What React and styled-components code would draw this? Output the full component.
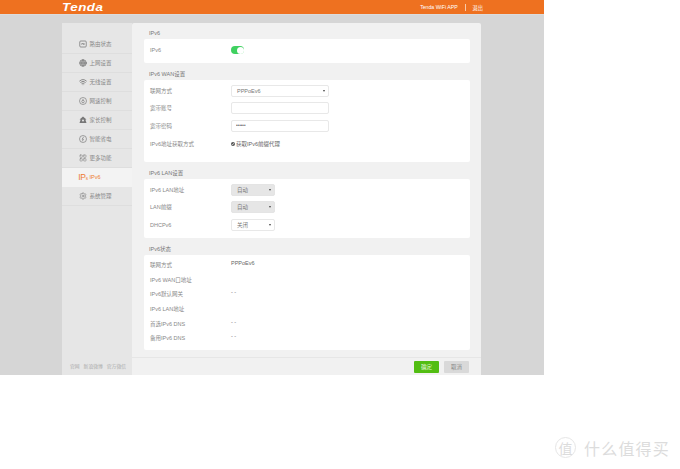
import React from 'react'
import styled, { createGlobalStyle } from 'styled-components'
import { Globe, Wifi, LayoutGrid, Settings } from 'lucide-react'

const Global = createGlobalStyle`
  html, body { margin: 0; padding: 0; background: #fff; }
  body { font-family: "Liberation Sans", "Noto Sans CJK SC", sans-serif; }
`

const IpGlyph = styled.b`
  font-size: 8.5px;
  font-weight: normal;
  color: #ee7b2f;
  letter-spacing: -0.2px;
  white-space: nowrap;
  small {
    font-size: 4.5px;
  }
`

const StatusIcon = () => (
  <svg width="8" height="8" viewBox="0 0 16 16" fill="none" stroke="#777" strokeWidth="1.5">
    <rect x="1.5" y="2" width="13" height="12" rx="2" />
    <path d="M4 8h3l1-2 1 3 1-1h2" />
  </svg>
)

const SpeedIcon = () => (
  <svg width="8" height="8" viewBox="0 0 16 16" fill="none" stroke="#777" strokeWidth="1.3">
    <circle cx="8" cy="8" r="7" />
    <circle cx="8" cy="9" r="2.5" />
    <path d="M8 6.5V4" />
  </svg>
)

const ParentIcon = () => (
  <svg width="8" height="8" viewBox="0 0 16 16" fill="#777">
    <path d="M8 1 1 7h2v1L1 14h14l-2-6V7h2z" />
    <circle cx="8" cy="9" r="2" fill="#e6e6e6" />
  </svg>
)

const PowerIcon = () => (
  <svg width="8" height="8" viewBox="0 0 16 16" fill="none" stroke="#777" strokeWidth="1.3">
    <circle cx="8" cy="8" r="7" />
    <path d="M9.5 3.5 6 8.5h3L6.5 12.5" />
  </svg>
)

const menu = [
  { label: '路由状态', icon: <StatusIcon /> },
  { label: '上网设置', icon: <Globe size={8} color="#777" fill="#bbb" strokeWidth={2} /> },
  { label: '无线设置', icon: <Wifi size={8} color="#777" strokeWidth={2.5} /> },
  { label: '网速控制', icon: <SpeedIcon /> },
  { label: '家长控制', icon: <ParentIcon /> },
  { label: '智能省电', icon: <PowerIcon /> },
  { label: '更多功能', icon: <LayoutGrid size={8} color="#777" strokeWidth={1.5} /> },
  { label: 'IPv6', active: true, icon: <IpGlyph>IP<small>s</small></IpGlyph> },
  { label: '系统管理', icon: <Settings size={8} color="#777" strokeWidth={1.75} /> },
]

const status = [
  ['联网方式', 'PPPoEv6'],
  ['IPv6 WAN口地址', ''],
  ['IPv6默认网关', '- -'],
  ['IPv6 LAN地址', ''],
  ['首选IPv6 DNS', '- -'],
  ['备用IPv6 DNS', '- -'],
]

export default function App() {
  return (
    <>
      <Global />
      <Page>
        <Header>
          <Logo>Tenda</Logo>
          <HeaderLinks>
            <HeaderLink>Tenda WiFi APP</HeaderLink>
            <HeaderSep />
            <HeaderLink>退出</HeaderLink>
          </HeaderLinks>
        </Header>
        <Body>
          <Sidebar>
            <Menu>
              {menu.map((m) => (
                <MenuItem key={m.label} $active={m.active}>
                  <MenuIcon>{m.icon}</MenuIcon>
                  {m.label}
                </MenuItem>
              ))}
            </Menu>
            <SideFooter>
              <span>官网</span>
              <span>新浪微博</span>
              <span>官方微信</span>
            </SideFooter>
          </Sidebar>
          <Main>
            <Content>
              <SectionTitle>IPv6</SectionTitle>
              <Card $height={24}>
                <Row $height={18}>
                  <Label>IPv6</Label>
                  <Toggle />
                </Row>
              </Card>

              <SectionTitle>IPv6 WAN设置</SectionTitle>
              <Card $height={82}>
                <Row>
                  <Label>联网方式</Label>
                  <SelectBox $width={98}>PPPoEv6<Caret /></SelectBox>
                </Row>
                <Row>
                  <Label>宽带账号</Label>
                  <TextInput />
                </Row>
                <Row>
                  <Label>宽带密码</Label>
                  <TextInput type="password" value="123456" readOnly />
                </Row>
                <Row>
                  <Label>IPv6地址获取方式</Label>
                  <CheckRow>
                    <Check type="checkbox" checked readOnly />
                    获取IPv6前缀代理
                  </CheckRow>
                </Row>
              </Card>

              <SectionTitle>IPv6 LAN设置</SectionTitle>
              <Card $height={59}>
                <Row>
                  <Label>IPv6 LAN地址</Label>
                  <SelectBox $width={44} $disabled>自动<Caret /></SelectBox>
                </Row>
                <Row>
                  <Label>LAN前缀</Label>
                  <SelectBox $width={44} $disabled>自动<Caret /></SelectBox>
                </Row>
                <Row>
                  <Label>DHCPv6</Label>
                  <SelectBox $width={44}>关闭<Caret /></SelectBox>
                </Row>
              </Card>

              <SectionTitle>IPv6状态</SectionTitle>
              <Card $height={95}>
                {status.map(([k, v]) => (
                  <Row key={k} $height={14.7}>
                    <Label>{k}</Label>
                    <Value>{v}</Value>
                  </Row>
                ))}
              </Card>
            </Content>
            <ActionBar>
              <Button $primary>确定</Button>
              <Button>取消</Button>
            </ActionBar>
          </Main>
        </Body>
      </Page>
      <Watermark>
        <WatermarkBadge>值</WatermarkBadge>
        什么值得买
      </Watermark>
    </>
  )
}

const Page = styled.div`
  width: 544px;
  height: 375px;
  background: #d6d6d6;
  display: flex;
  flex-direction: column;
`
const Header = styled.div`
  height: 15px;
  box-sizing: border-box;
  flex: none;
  background: #ee7120;
  border-bottom: 1px solid #dcdcdc;
  display: flex;
  align-items: center;
  justify-content: space-between;
  padding: 0 62px;
  color: #fff;
`
const Logo = styled.div`
  font: italic bold 11px "Liberation Sans", sans-serif;
  letter-spacing: 0.4px;
  transform: scaleX(1.22);
  transform-origin: left center;
  line-height: 14px;
`
const HeaderLinks = styled.div`
  display: flex;
  align-items: center;
  gap: 7px;
  margin-right: -1px;
`
const HeaderLink = styled.span`
  font-size: 5.2px;
  color: #fff;
`
const HeaderSep = styled.i`
  width: 1px;
  height: 7px;
  background: #f8c9a8;
`
const Body = styled.div`
  flex: 1;
  min-height: 0;
  display: flex;
  padding: 8px 63px 0 62px;
`
const Sidebar = styled.div`
  width: 70px;
  flex: none;
  background: #e6e6e6;
  display: flex;
  flex-direction: column;
  justify-content: space-between;
  padding-top: 11.5px;
  box-sizing: border-box;
`
const Menu = styled.div`
  display: flex;
  flex-direction: column;
`
const MenuItem = styled.div`
  height: 19.1px;
  box-sizing: border-box;
  display: flex;
  align-items: center;
  padding-left: 17px;
  gap: 2.5px;
  font-size: 5.5px;
  color: ${(p) => (p.$active ? '#ee7b2f' : '#888')};
  background: ${(p) => (p.$active ? '#f3f3f3' : 'transparent')};
  border-bottom: 1px solid ${(p) => (p.$active ? '#f3f3f3' : '#dedede')};
`
const MenuIcon = styled.span`
  width: 8px;
  height: 8px;
  display: flex;
  align-items: center;
  justify-content: center;
`
const SideFooter = styled.div`
  display: flex;
  gap: 4px;
  font-size: 4.8px;
  color: #aaa;
  padding: 0 0 6px 8px;
`
const Main = styled.div`
  width: 349px;
  flex: none;
  background: #f1f1f1;
  border-radius: 2px 2px 0 0;
  display: flex;
  flex-direction: column;
`
const Content = styled.div`
  flex: 1;
  padding: 0 11px 0 12px;
`
const SectionTitle = styled.div`
  height: 11px;
  margin-top: 6px;
  padding-left: 5px;
  font-size: 5.5px;
  line-height: 11px;
  color: #777;
  &:first-child {
    margin-top: 5px;
  }
`
const Card = styled.div`
  height: ${(p) => p.$height}px;
  box-sizing: border-box;
  padding: 2px 6px;
  background: #fff;
  border-radius: 2px;
`
const Row = styled.div`
  height: ${(p) => p.$height || 17.6}px;
  display: flex;
  align-items: center;
  &:first-child {
    margin-top: ${(p) => (p.$height === 14.7 ? 0.5 : 0)}px;
  }
`
const Label = styled.div`
  width: 81px;
  flex: none;
  font-size: 5.5px;
  color: #888;
`
const Toggle = styled.div`
  width: 13px;
  height: 8px;
  border-radius: 4px;
  background: #3fd160;
  position: relative;
  &::after {
    content: '';
    position: absolute;
    right: 0.5px;
    top: 0.5px;
    width: 7px;
    height: 7px;
    border-radius: 50%;
    background: #fff;
  }
`
const SelectBox = styled.div`
  width: ${(p) => p.$width}px;
  height: 12px;
  box-sizing: border-box;
  position: relative;
  border: 1px solid ${(p) => (p.$disabled ? '#e4e4e4' : '#e8e8e8')};
  border-radius: 2px;
  background: ${(p) => (p.$disabled ? '#e6e6e6' : '#fff')};
  font-size: 5.5px;
  line-height: 10px;
  color: #777;
  padding-left: 5px;
`
const Caret = styled.i`
  position: absolute;
  right: 3px;
  top: 4px;
  border: 1.5px solid transparent;
  border-top: 2px solid #444;
  border-bottom: 0;
`
const TextInput = styled.input`
  width: 98px;
  height: 12px;
  box-sizing: border-box;
  border: 1px solid #e8e8e8;
  border-radius: 2px;
  background: #fff;
  padding: 0 4px;
  font-size: 4.5px;
  color: #666;
  outline: none;
`
const CheckRow = styled.label`
  display: flex;
  align-items: center;
  gap: 1px;
  font-size: 5.5px;
  color: #666;
`
const Check = styled.input`
  width: 4px;
  height: 4px;
  margin: 0;
  accent-color: #555;
`
const Value = styled.div`
  font-size: 5.5px;
  color: #666;
  margin-top: -4px;
`
const ActionBar = styled.div`
  height: 18px;
  flex: none;
  box-sizing: border-box;
  border-top: 1px solid #e6e6e6;
  display: flex;
  justify-content: flex-end;
  align-items: flex-end;
  gap: 5px;
  padding: 0 12px 2px 0;
`
const Button = styled.div`
  width: 25px;
  height: 12px;
  border-radius: 1px;
  background: ${(p) => (p.$primary ? '#52bd12' : '#d9d9d9')};
  color: ${(p) => (p.$primary ? '#e8f8de' : '#888')};
  font-size: 5.5px;
  display: flex;
  align-items: center;
  justify-content: center;
`
const Watermark = styled.div`
  display: flex;
  justify-content: flex-end;
  align-items: center;
  gap: 8px;
  height: 23px;
  margin-top: 61px;
  padding-right: 10px;
  font-size: 16px;
  letter-spacing: 1.2px;
  color: #dcdcdc;
`
const WatermarkBadge = styled.span`
  width: 21px;
  height: 21px;
  border-radius: 50%;
  border: 1px solid #e6e6e6;
  box-sizing: border-box;
  display: flex;
  align-items: center;
  justify-content: center;
  font-size: 14px;
  letter-spacing: 0;
`
